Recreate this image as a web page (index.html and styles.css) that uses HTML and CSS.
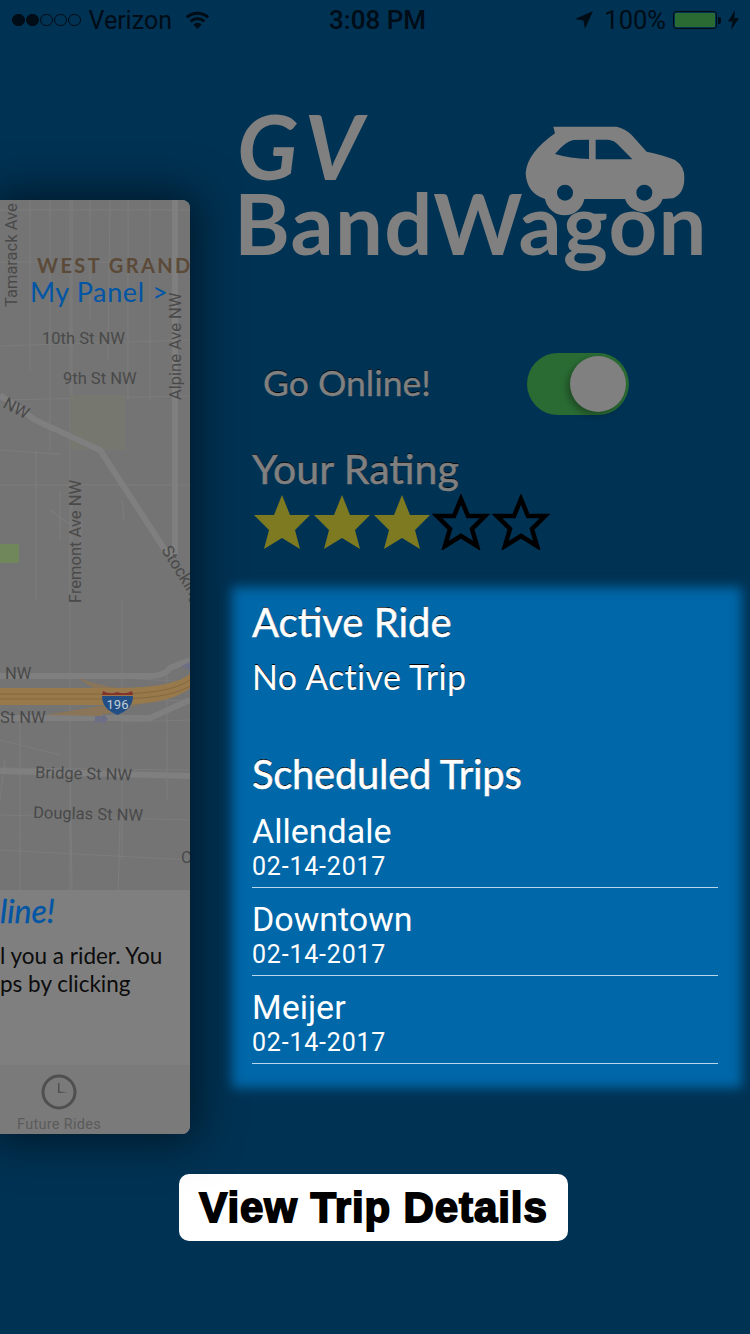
FILE: index.html
```html
<!DOCTYPE html>
<html lang="en">
<head>
<meta charset="utf-8">
<title>GV BandWagon</title>
<link rel="stylesheet" href="styles.css">
</head>
<body>
<div class="status">
  <div class="status-left">
    <div class="dots"><i class="dot on"></i><i class="dot on"></i><i class="dot"></i><i class="dot"></i><i class="dot"></i></div>
    <span class="carrier">Verizon</span>
    <svg class="wifi" viewBox="0 0 26 19"><path d="M13 19 8.6 14.2a6.5 6.5 0 0 1 8.8 0Z"/><path d="M6.8 12.2 4.6 9.8a12.6 12.6 0 0 1 16.8 0l-2.2 2.4a9.3 9.3 0 0 0-12.4 0Z"/><path d="M2.9 8 .6 5.5a18.4 18.4 0 0 1 24.8 0L23.1 8a15 15 0 0 0-20.200 0Z"/></svg>
  </div>
  <span class="time">3:08 PM</span>
  <div class="status-right">
    <svg class="arrow" viewBox="0 0 18 18"><path d="M18 0 0 8l8.500 1.500L10 18Z"/></svg>
    <span class="pct">100%</span>
    <div class="battery"><div class="battery-fill"></div></div><i class="battery-cap"></i>
    <svg class="bolt" viewBox="0 0 11 20"><path d="M7 0 0 11.500h4.500L3 20l8-12H6.300Z"/></svg>
  </div>
</div>

<main class="main">
  <aside class="phone">
    <div class="map">
      <svg class="map-svg" viewBox="0 0 190 690">
        <g class="minor">
          <path d="M0 10H190M0 62H190M0 146 190 140M0 200 190 196M0 250 60 254M60 340V290M122 478 190 482M120 502 190 500M121 522 190 520M0 568 190 570M0 615 190 620M0 650 190 660M0 600 5 560"/>
          <path d="M30 0V170M50 0V250M72 0V200M90 0V120M110 0 108 160M128 0V200M150 0V175M36 260V250M70 0V690M36 250V400M0 540 60 555M20 520V690M70 550 72 690M122 400 122 660M167 600V470M150 200V130M20 690V560M120 620 118 700"/>
          <path d="M0 285H190M72 340V300M124 320 122 300"/>
          <path d="M50 310 78 330 82 322 78 360"/>
        </g>
        <path class="block" d="M70 195H125V250H70Z"/>
        <path class="park" d="M0 344H19V363H0Z"/>
        <path class="road" d="M0 195 35 220 100 250 165 350 175 355M175 0V355M0 476H150Q165 476 170 468L190 460M0 518H150L190 500M0 571 190 576"/>
        <path class="hw-light" d="M78 478Q110 490 145 490L120 505ZM45 515 100 506 140 504 100 516Z"/>
        <path class="hw" d="M0 488H110C150 488 175 485 190 474V488C175 500 150 505 110 505H0Z"/>
        <path class="hw-line" d="M0 494H110C150 494 175 490 190 480M0 499H110C150 499 175 495 190 486"/>
        <path class="ar" d="M181 466 190 462V470ZM95 516H103V513L108 519 103 525V522H95Z"/>
        <path class="shield-r" d="M103 491Q110 495 117 492 125 495 132 491L133 495H102Z"/>
        <path class="shield-b" d="M102 496H133C133 508 124 512 117.500 515 111 512 102 508 102 496Z"/>
        <text class="t-shield" x="117.500" y="509">196</text>
        <text class="t-west" x="37" y="73">WEST GRAND</text>
        <text class="t-panel" x="30" y="102">My Panel &gt;</text>
        <text class="t-road" transform="translate(17 107) rotate(-90)">Tamarack Ave</text>
        <text class="t-road" transform="translate(181 200) rotate(-90)">Alpine Ave NW</text>
        <text class="t-road" x="42" y="144">10th St NW</text>
        <text class="t-road" x="63" y="184">9th St NW</text>
        <text class="t-road" transform="translate(2 207) rotate(28)">NW</text>
        <text class="t-road" transform="translate(81 403) rotate(-90)">Fremont Ave NW</text>
        <text class="t-road" transform="translate(161 350) rotate(58)">Stocking</text>
        <text class="t-road" x="5" y="479">NW</text>
        <text class="t-road" x="0" y="523">St NW</text>
        <text class="t-road" transform="translate(35 578) rotate(1.500)">Bridge St NW</text>
        <text class="t-road" transform="translate(33 618) rotate(1.500)">Douglas St NW</text>
        <text class="t-road" x="181" y="663">C</text>
      </svg>
    </div>
    <div class="card">
      <div class="card-title">line!</div>
      <p class="card-line">l you a rider. You</p>
      <p class="card-line">ps by clicking</p>
    </div>
    <div class="tabs">
      <svg class="clock" viewBox="0 0 36 36"><circle cx="18" cy="18" r="16" /><path d="M17 9V19L27 18.500 18.500 17.500 18.500 9Z"/></svg>
      <span class="tab-label">Future Rides</span>
    </div>
  </aside>

  <section class="side">
    <div class="logo">
      <div class="logo-gv">GV</div>
      <div class="logo-name">BandWagon</div>
      <svg class="car" viewBox="0 0 1500 600"><path class="car-body" d="M1000 110H1190Q1215 115 1235 135L1280 185Q1330 195 1365 210 1395 230 1393 265 1393 310 1360 325L1328 327A60 60 0 0 1 1215 327H1093A60 60 0 0 1 975 327Q920 310 917 250 920 190 1005 130Z"/><path class="car-cut" d="M1005 192Q1035 155 1060 150L1107 149V207Q1050 205 1005 192ZM1127 149H1165Q1185 152 1195 165L1237 208H1127Z"/><circle class="car-cut" cx="1035" cy="308" r="24"/><circle class="car-cut" cx="1273" cy="308" r="24"/></svg>
    </div>

    <div class="online">
      <span class="online-label">Go Online!</span>
      <div class="toggle"><div class="knob"></div></div>
    </div>

    <h2 class="rating-title">Your Rating</h2>
    <div class="stars">
      <svg class="star" viewBox="0 0 60 56"><polygon class="star-on" points="30,1 38,21 58,21 43,36 48,55 30,44 12,55 17,36 2,21 22,21"/></svg>
      <svg class="star" viewBox="0 0 60 56"><polygon class="star-on" points="30,1 38,21 58,21 43,36 48,55 30,44 12,55 17,36 2,21 22,21"/></svg>
      <svg class="star" viewBox="0 0 60 56"><polygon class="star-on" points="30,1 38,21 58,21 43,36 48,55 30,44 12,55 17,36 2,21 22,21"/></svg>
      <svg class="star" viewBox="0 0 60 56"><polygon class="star-off" points="29,5 36,22 53,22 40,35 45,52 29,42 13,52 18,35 5,22 22,22"/></svg>
      <svg class="star" viewBox="0 0 60 56"><polygon class="star-off" points="29,5 36,22 53,22 40,35 45,52 29,42 13,52 18,35 5,22 22,22"/></svg>
    </div>

    <div class="rides">
      <h2 class="rides-title">Active Ride</h2>
      <p class="rides-none">No Active Trip</p>
      <h2 class="rides-title rides-sched">Scheduled Trips</h2>
      <ul class="trips">
        <li class="trip"><span class="trip-name">Allendale</span><span class="trip-date">02-14-2017</span></li>
        <li class="trip"><span class="trip-name">Downtown</span><span class="trip-date">02-14-2017</span></li>
        <li class="trip"><span class="trip-name">Meijer</span><span class="trip-date">02-14-2017</span></li>
      </ul>
    </div>
  </section>
</main>

<button class="details">View Trip Details</button>
</body>
</html>
```
FILE: styles.css
```css
* { box-sizing: border-box; }
html, body { margin: 0; padding: 0; }
body {
  width: 750px;
  height: 1334px;
  overflow: hidden;
  background: #003253;
  font-family: Lato, "Liberation Sans", sans-serif;
}

/* status bar */
.status {
  height: 40px;
  display: grid;
  grid-template-columns: 1fr auto 1fr;
  align-items: center;
  padding: 0 11px 0 12px;
  color: #000c16;
  font-family: Roboto, sans-serif;
  font-size: 25px;
}
.status-left, .status-right { display: flex; align-items: center; }
.status-right { justify-content: flex-end; }
.dots { display: flex; gap: 1.500px; margin-right: 8px; }
.dot { width: 12.500px; height: 12.500px; border-radius: 50%; border: 1px solid #000c16; }
.dot.on { background: #000c16; }
.wifi { width: 25px; height: 18px; margin-left: 13px; fill: #000c16; }
.time { font-size: 26px; font-weight: 500; position: relative; left: 2px; }
.arrow { width: 18px; height: 18px; fill: #000c16; margin-right: 11px; }
.pct { margin-right: 7px; font-size: 25.500px; }
.battery { width: 44px; height: 18px; border: 1px solid #000c16; border-radius: 3px; padding: 1px; }
.battery-fill { height: 100%; background: #2a6b33; border-radius: 1px; }
.battery-cap { width: 3px; height: 7px; background: #000c16; border-radius: 0 2px 2px 0; margin-left: 1px; margin-right: 7px; }
.bolt { width: 11px; height: 20px; fill: #000c16; }

/* page */
.main { display: flex; height: 1094px; }

/* left phone */
.phone {
  width: 190px;
  height: 934px;
  margin-top: 160px;
  border-radius: 0 8px 8px 0;
  overflow: hidden;
  flex: none;
  display: flex;
  flex-direction: column;
  background: #7e7e7e;
  box-shadow: 0 0 44px 8px rgba(0, 0, 0, .5);
}
.map { height: 690px; flex: none; background: #747474; }
.map-svg { display: block; width: 190px; height: 690px; }
.minor path { fill: none; stroke: #7c7c7c; stroke-width: 1.200; }
.road { fill: none; stroke: #7f7f7f; stroke-width: 6; }
.block { fill: #767870; }
.park { fill: #6f875b; }
.hw { fill: #97794c; }
.hw-line { fill: none; stroke: #85693f; stroke-width: 1; }
.hw-light { fill: #8a7558; }
.ar { fill: #6c6f85; }
.shield-r { fill: #84322e; }
.shield-b { fill: #214f85; }
.t-shield { font: 13px Roboto, sans-serif; fill: #c4cdd6; text-anchor: middle; }
.t-west { font: 700 20px Lato, sans-serif; fill: #5c4a39; letter-spacing: 2.400px; }
.t-panel { font: 27px Lato, sans-serif; fill: #0055a5; letter-spacing: .600px; }
.t-road { font: 16.500px Roboto, sans-serif; fill: #494949; }

.card { height: 175px; flex: none; padding-top: 3px; overflow: hidden; background: #7f7f7f; }
.card-title { font-size: 32px; font-style: italic; color: #0055a5; line-height: 36px; -webkit-text-stroke: .3px #0055a5; }
.card-line { margin: 0; white-space: nowrap; font-size: 22.500px; line-height: 28px; color: #0c0c0c; }
.card-title + .card-line { margin-top: 13px; }
.tabs { flex: 1; display: flex; flex-direction: column; align-items: flex-start; padding: 9px 0 0 41px; background: #7a7a7a; }
.clock { width: 36px; height: 36px; }
.clock circle { fill: none; stroke: #4f4f4f; stroke-width: 3; }
.clock path { fill: #4f4f4f; }
.tab-label { margin: 6px 0 0 -24px; font: 14.500px Roboto, sans-serif; letter-spacing: .300px; color: #5b5b5b; white-space: nowrap; }

/* right */
.side { flex: 1; min-width: 0; padding-top: 70px; display: flex; flex-direction: column; }
.logo { position: relative; height: 226px; padding-left: 50px; color: #808080; }
.logo-gv { font-size: 90px; font-style: italic; font-weight: 700; line-height: 70px; height: 70px; margin-left: -3px; letter-spacing: 8px; }
.logo-name { font-size: 85px; font-weight: 700; line-height: 82px; letter-spacing: 1.300px; margin: 1px 0 0 -6px; }
.car { position: absolute; left: 30px; top: -20px; width: 500px; height: 200px; }
.car-body { fill: #808080; }
.car-cut { fill: #003253; }

.online { display: flex; align-items: center; height: 62px; margin-top: 17px; padding-left: 73px; }
.online-label { width: 264px; margin-top: -4px; font-size: 35.500px; color: #808080; text-shadow: 0 -1px 0 #000; -webkit-text-stroke: .4px #808080; }
.toggle { width: 102px; height: 62px; padding: 3px; background: #2a6b33; border-radius: 31px; display: flex; justify-content: flex-end; }
.knob { width: 56px; height: 56px; border-radius: 50%; background: #808080; box-shadow: -3px 3px 6px rgba(0, 0, 0, .3); }

.rating-title { margin: 30px 0 0 62px; font-size: 41px; font-weight: 400; line-height: 48px; color: #808080; text-shadow: 0 -1px 0 #000; -webkit-text-stroke: .5px #808080; }
.stars { display: flex; margin: 1px 0 0 62px; }
.star { width: 60px; height: 56px; display: block; flex: none; }
.star-on { fill: #7d7a22; }
.star-off { fill: none; stroke: #000; stroke-width: 4.500; }

.rides {
  position: relative;
  isolation: isolate;
  width: 495px;
  height: 485px;
  margin: 45px 0 0 50px;
  padding: 3px 17px 0 12px;
  color: #fff;
}
.rides::before {
  content: "";
  position: absolute;
  inset: -8px -7px -8px -8px;
  z-index: -1;
  background: #0067a8;
  filter: blur(6px);
}
.rides-title { margin: 0; font-size: 40px; font-weight: 400; line-height: 48px; text-shadow: 0 -1px 0 #000; -webkit-text-stroke: .5px #fff; }
.rides-none { margin: 9px 0 0; font-size: 34px; line-height: 44px; letter-spacing: .3px; text-shadow: 0 -1px 0 #000; }
.rides-sched { margin-top: 51px; letter-spacing: -.3px; }
.trips { margin: 2px 0 0; padding: 0; list-style: none; }
.trip { height: 88px; padding-top: 11px; display: flex; flex-direction: column; border-bottom: 1px solid #b9d7ea; font-family: Roboto, sans-serif; }
.trip-name { font-size: 34px; line-height: 41px; }
.trip-date { font-size: 25px; line-height: 30px; letter-spacing: .800px; }

/* button */
.details {
  display: block;
  width: 389px;
  height: 67px;
  margin: 40px 0 0 179px;
  padding: 0;
  border: 0;
  border-radius: 10px;
  background: #fff;
  color: #000;
  font: 700 42px "Liberation Sans", Arial, sans-serif;
  letter-spacing: .9px;
  -webkit-text-stroke: 1.800px #000;
}
```
